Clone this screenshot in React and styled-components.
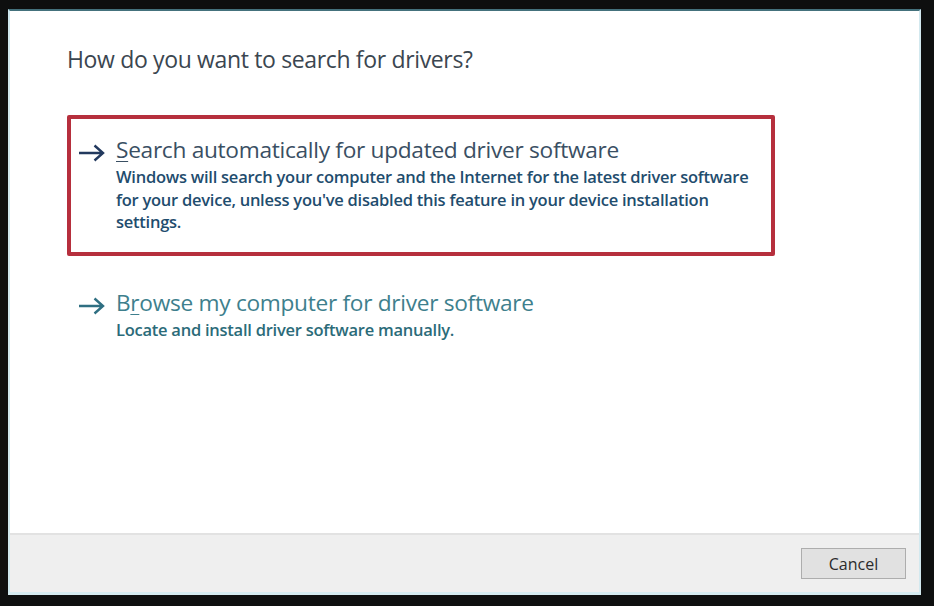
import React from 'react';
import styled, { createGlobalStyle } from 'styled-components';

const GlobalStyle = createGlobalStyle`
    html, body {
        margin: 0;
        padding: 0;
        background: #0e0f0f;
    }
    body {
        font-family: "Open Sans", "Noto Sans", sans-serif;
    }
`;

const Screen = styled.div`
    width: 934px;
    height: 606px;
    padding: 9px 0 0 8px;
    box-sizing: border-box;
`;

const Dialog = styled.div`
    width: 913px;
    height: 586px;
    display: flex;
    flex-direction: column;
    box-sizing: border-box;
    border-top: 2px solid #44717c;
    border-left: 2px solid #cfe7ee;
    border-right: 2px solid #d3e9ef;
    border-bottom: 3px solid #d6ecf1;
    background: #ffffff;
`;

const Body = styled.div`
    flex: 1;
    padding: 31px 0 0 57px;
    display: flex;
    flex-direction: column;
`;

const Heading = styled.h1`
    margin: 0;
    font-size: 23px;
    font-weight: 400;
    color: #3b4650;
    letter-spacing: -0.35px;
    line-height: 34px;
`;

const Option = styled.div`
    width: 708px;
    box-sizing: border-box;
    display: flex;
    gap: 11px;
    padding: ${(p) => (p.$selected ? '15px 10px 18px 7px' : '0 10px 0 7px')};
    margin-top: ${(p) => p.$gap}px;
    border: 4px solid ${(p) => (p.$selected ? '#b62f3d' : 'transparent')};
    border-radius: 2px;
`;

const Arrow = styled.svg`
    flex: none;
    width: 27px;
    height: 18px;
    margin-top: 10px;
`;

const OptionText = styled.div`
    display: flex;
    flex-direction: column;
`;

const OptionTitle = styled.div`
    font-size: 22.7px;
    line-height: 32px;
    color: ${(p) => p.$color};
    letter-spacing: -0.3px;

    u {
        text-decoration-thickness: 1px;
        text-underline-offset: 3px;
    }
`;

const OptionDesc = styled.div`
    font-size: 16.5px;
    font-weight: 600;
    line-height: 22.5px;
    color: ${(p) => p.$color};
    letter-spacing: -0.25px;
    max-width: 645px;
`;

const Footer = styled.div`
    height: 59px;
    flex: none;
    background: #efefef;
    border-top: 2px solid #e2e2e2;
    display: flex;
    justify-content: flex-end;
    align-items: flex-start;
    padding: 13px 13px 0 0;
    box-sizing: border-box;
`;

const Button = styled.button`
    width: 105px;
    height: 31px;
    background: #e1e1e1;
    border: 1px solid #adadad;
    font-family: "Open Sans", "Noto Sans", sans-serif;
    font-size: 16px;
    color: #2b2b2b;
    padding: 0;
`;

const ArrowIcon = ({ color }) => (
    <Arrow viewBox="0 0 27 18">
        <path d="M1 9 H24.5 M16.5 1.5 L25 9 L16.5 16.5" fill="none" stroke={color} strokeWidth="2.4" />
    </Arrow>
);

const App = () => {
    return (
        <Screen>
            <GlobalStyle />
            <Dialog>
                <Body>
                    <Heading>How do you want to search for drivers?</Heading>
                    <Option $selected $gap={39}>
                        <ArrowIcon color="#22395e" />
                        <OptionText>
                            <OptionTitle $color="#3a4f63">
                                <u>S</u>earch automatically for updated driver software
                            </OptionTitle>
                            <OptionDesc $color="#1f4d6e">
                                Windows will search your computer and the Internet for the latest driver software
                                for your device, unless you've disabled this feature in your device installation
                                settings.
                            </OptionDesc>
                        </OptionText>
                    </Option>
                    <Option $gap={27}>
                        <ArrowIcon color="#2f6f82" />
                        <OptionText>
                            <OptionTitle $color="#3e7f8d">
                                B<u>r</u>owse my computer for driver software
                            </OptionTitle>
                            <OptionDesc $color="#2b6b79">Locate and install driver software manually.</OptionDesc>
                        </OptionText>
                    </Option>
                </Body>
                <Footer>
                    <Button>Cancel</Button>
                </Footer>
            </Dialog>
        </Screen>
    );
};

export default App;
